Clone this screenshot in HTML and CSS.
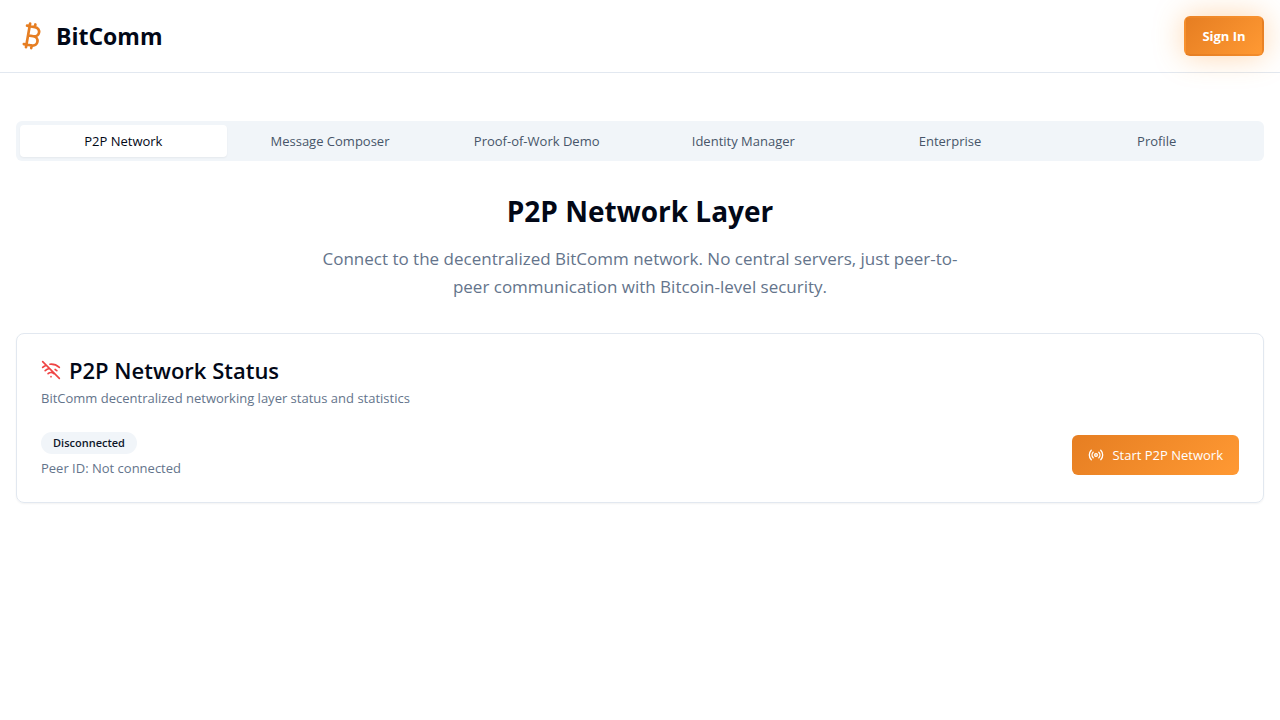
FILE: index.html
```html
<!DOCTYPE html>
<html lang="en">
<head>
  <meta charset="utf-8">
  <meta name="viewport" content="width=device-width, initial-scale=1">
  <title>BitComm</title>
  <link rel="stylesheet" href="styles.css">
</head>
<body>
  <header class="topbar">
    <div class="brand">
      <svg class="icon brand-icon" viewBox="0 0 24 24" aria-hidden="true"><path d="M11.767 19.089c4.924.868 6.14-6.025 1.216-6.894m-1.216 6.894L5.86 18.047m5.908 1.042-.347 1.97m1.563-8.864c4.924.869 6.14-6.025 1.215-6.893m-1.215 6.893-3.94-.694m5.155-6.2L8.29 4.26m5.908 1.042.348-1.97M7.48 20.364l3.126-17.727"/></svg>
      <span class="brand-name">BitComm</span>
    </div>
    <button class="button button-signin" type="button">Sign In</button>
  </header>

  <main class="content">
    <div class="tabs" role="tablist">
      <button class="tab tab-active" type="button" role="tab" aria-selected="true">P2P Network</button>
      <button class="tab" type="button" role="tab" aria-selected="false">Message Composer</button>
      <button class="tab" type="button" role="tab" aria-selected="false">Proof-of-Work Demo</button>
      <button class="tab" type="button" role="tab" aria-selected="false">Identity Manager</button>
      <button class="tab" type="button" role="tab" aria-selected="false">Enterprise</button>
      <button class="tab" type="button" role="tab" aria-selected="false">Profile</button>
    </div>

    <section class="intro">
      <h1 class="intro-title">P2P Network Layer</h1>
      <p class="intro-text">Connect to the decentralized BitComm network. No central servers, just peer-to-peer communication with Bitcoin-level security.</p>
    </section>

    <section class="card">
      <div class="card-header">
        <h2 class="card-title">
          <svg class="icon status-icon" viewBox="0 0 24 24" aria-hidden="true"><path d="M12 20h.01M8.5 16.429a5 5 0 0 1 7 0M5 12.859a10 10 0 0 1 5.17-2.69M19 12.859a10 10 0 0 0-2.007-1.523M2 8.82a15 15 0 0 1 4.177-2.643M22 8.82a15 15 0 0 0-11.288-3.764M2 2l20 20"/></svg>
          <span>P2P Network Status</span>
        </h2>
        <p class="muted">BitComm decentralized networking layer status and statistics</p>
      </div>
      <div class="card-body">
        <div class="status">
          <span class="badge">Disconnected</span>
          <p class="muted">Peer ID: Not connected</p>
        </div>
        <button class="button" type="button">
          <svg class="icon button-icon" viewBox="0 0 24 24" aria-hidden="true"><path d="M4.9 19.1C1 15.2 1 8.8 4.9 4.9M7.8 16.2c-2.3-2.3-2.3-6.1 0-8.5M16.2 7.8c2.3 2.3 2.3 6.1 0 8.5M19.1 4.9C23 8.8 23 15.1 19.1 19"/><circle cx="12" cy="12" r="2"/></svg>
          Start P2P Network
        </button>
      </div>
    </section>
  </main>
</body>
</html>
```
FILE: styles.css
```css
* {
  box-sizing: border-box;
}

body {
  margin: 0;
  background: #fff;
  color: #020817;
  font-family: "Open Sans", "Noto Sans", sans-serif;
  font-size: 13px;
  line-height: 20px;
}

h1, h2, p {
  margin: 0;
}

button {
  border: 0;
  font: inherit;
  cursor: pointer;
}

.icon {
  flex: none;
  fill: none;
  stroke: currentColor;
  stroke-width: 2;
  stroke-linecap: round;
  stroke-linejoin: round;
}

.topbar {
  display: flex;
  align-items: center;
  justify-content: space-between;
  padding: 16px;
  border-bottom: 1px solid #e2e8f0;
}

.brand {
  display: flex;
  align-items: center;
  gap: 8px;
}

.brand-icon {
  width: 32px;
  height: 32px;
  color: #e67e22;
}

.brand-name {
  font-size: 23px;
  line-height: 32px;
  font-weight: 700;
}

.button {
  display: inline-flex;
  align-items: center;
  justify-content: center;
  gap: 8px;
  height: 40px;
  padding: 0 16px;
  border-radius: 6px;
  background: linear-gradient(135deg, #e67e22, #ff9933);
  color: #fff;
  white-space: nowrap;
}

.button-signin {
  min-width: 80px;
  border: 2px solid rgba(230, 126, 34, 0.2);
  font-weight: 700;
  box-shadow: 0 0 30px rgba(255, 153, 51, 0.4);
}

.button-icon {
  width: 16px;
  height: 16px;
}

.content {
  padding: 48px 16px;
}

.tabs {
  display: grid;
  grid-template-columns: repeat(6, 1fr);
  padding: 4px;
  border-radius: 6px;
  background: #f1f5f9;
}

.tab {
  padding: 6px 12px;
  border-radius: 4px;
  background: transparent;
  color: #475569;
}

.tab-active {
  background: #fff;
  color: #020817;
  box-shadow: 0 1px 2px rgba(0, 0, 0, 0.05);
}

.intro {
  padding: 32px 0;
  text-align: center;
}

.intro-title {
  margin-bottom: 16px;
  font-size: 28px;
  line-height: 36px;
  font-weight: 700;
}

.intro-text {
  max-width: 656px;
  margin: 0 auto;
  color: #64748b;
  font-size: 17px;
  line-height: 28px;
}

.card {
  padding: 24px;
  border: 1px solid #e2e8f0;
  border-radius: 8px;
  box-shadow: 0 1px 2px rgba(0, 0, 0, 0.05);
}

.card-header {
  display: grid;
  gap: 6px;
  margin-bottom: 24px;
}

.card-title {
  display: flex;
  align-items: center;
  gap: 8px;
  font-size: 22px;
  line-height: 24px;
  font-weight: 600;
}

.status-icon {
  width: 20px;
  height: 20px;
  color: #ef4444;
}

.muted {
  color: #64748b;
}

.card-body {
  display: flex;
  align-items: center;
  justify-content: space-between;
}

.status {
  display: flex;
  flex-direction: column;
  align-items: flex-start;
  gap: 4px;
}

.badge {
  padding: 3px 12px;
  border-radius: 11px;
  background: #f1f5f9;
  color: #0f172a;
  font-size: 11px;
  line-height: 16px;
  font-weight: 600;
}
```
